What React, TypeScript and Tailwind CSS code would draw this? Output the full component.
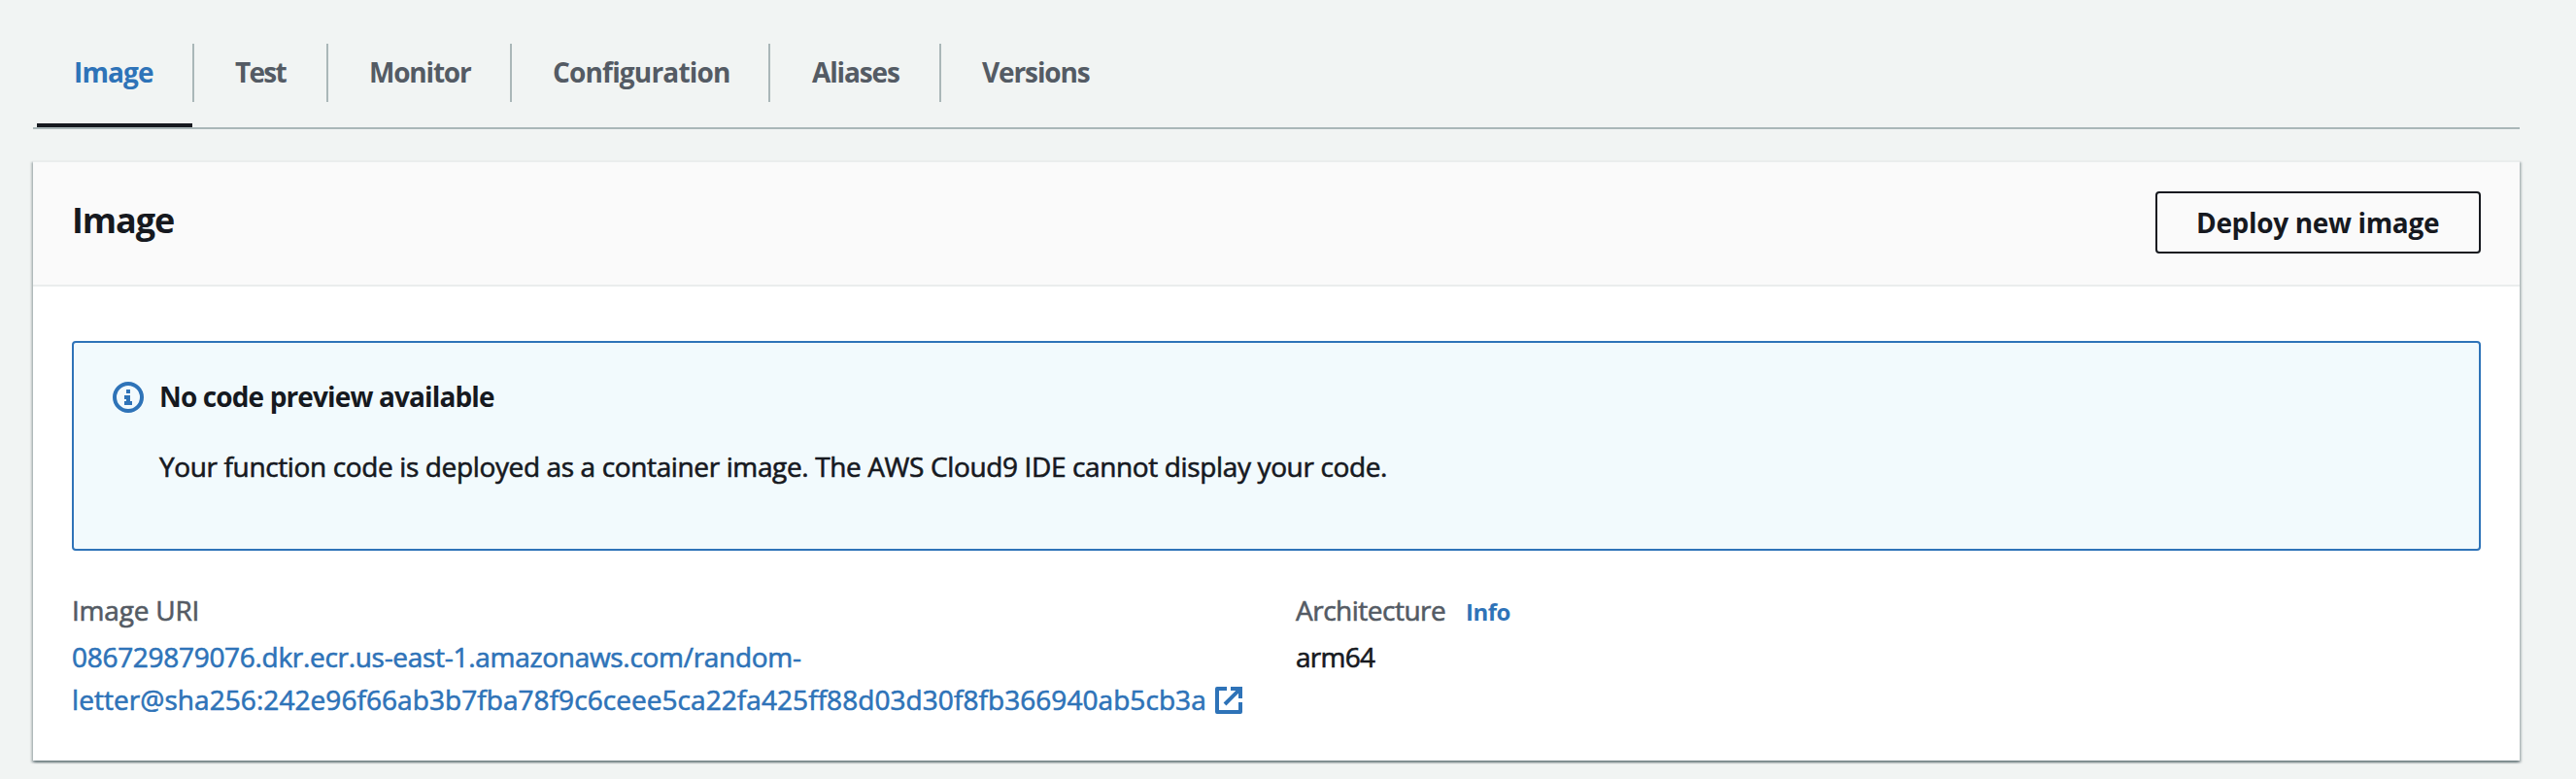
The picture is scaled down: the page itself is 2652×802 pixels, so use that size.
type Tab = { label: string; width: string; spacing: string; active?: boolean };

const tabs: Tab[] = [
  { label: "Image", width: "w-[162px] pl-[38px]", spacing: "tracking-[-0.87px]", active: true },
  { label: "Test", width: "w-[138px] pl-[42px]", spacing: "tracking-[-1.7px]" },
  { label: "Monitor", width: "w-[189px] pl-[42px]", spacing: "tracking-[-1.2px]" },
  { label: "Configuration", width: "w-[266px] pl-[42px]", spacing: "tracking-[-0.82px]" },
  { label: "Aliases", width: "w-[176px] pl-[43px]", spacing: "tracking-[-1.13px]" },
  { label: "Versions", width: "w-[160px] pl-[42px]", spacing: "tracking-[-1.12px]" },
];

function InfoIcon() {
  return (
    <svg width="32" height="32" viewBox="0 0 32 32" className="block shrink-0" fill="#2e73b8">
      <circle cx="16" cy="16" r="14" fill="none" stroke="#2e73b8" strokeWidth="4" />
      <path d="M14 8h4v4h-4zM12 14h6v6h2v4h-8v-4h2v-2h-2z" />
    </svg>
  );
}

function ExternalIcon() {
  return (
    <svg width="28" height="28" viewBox="0 0 28 28" className="block shrink-0" fill="none" stroke="#2e73b8" strokeWidth="4">
      <path d="M12 2H2v24h24V16" strokeLinejoin="round" />
      <path d="M16 2h10v10M26 2 10 18" />
    </svg>
  );
}

export default function App() {
  return (
    <div className="h-[802px] w-full overflow-hidden bg-[#f1f4f3] pr-[58px] pl-[34px] font-['Open_Sans','Noto_Sans',sans-serif] text-[28px] leading-[44px] text-[#16191f]">
      <nav className="flex h-[133px] border-b-2 border-[#aab7b8] pl-1">
        {tabs.map((tab, i) => (
          <div key={tab.label} className="flex flex-col justify-between pt-[45px]">
            <div
              className={`h-[60px] pt-[7px] font-bold whitespace-nowrap ${tab.width} ${tab.spacing} ${
                tab.active ? "text-[#2e73b8]" : "text-[#545b64]"
              } ${i < tabs.length - 1 ? "border-r-2 border-[#aab7b8]" : ""}`}
            >
              {tab.label}
            </div>
            {tab.active && <div className="h-1 w-[160px] bg-[#16191f]" />}
          </div>
        ))}
      </nav>

      <section className="mt-8 h-[618px] border-t-2 border-[#eaeded] bg-white shadow-[0_2px_2px_0_rgba(0,28,36,0.3),2px_2px_2px_0_rgba(0,28,36,0.2),-2px_2px_2px_0_rgba(0,28,36,0.2)]">
        <header className="flex h-32 items-start justify-between border-b-2 border-[#eaeded] bg-[#fafafa] pt-[30px] pr-10 pl-10">
          <h2 className="pt-[8px] text-[36px] font-bold tracking-[-1.09px]">Image</h2>
          <button className="flex h-16 w-[335px] items-center rounded-[4px] border-2 border-[#16191f] pl-10 font-bold tracking-[-0.34px] whitespace-nowrap">
            Deploy new image
          </button>
        </header>

        <div className="px-10 pt-14">
          <div className="flex h-[216px] gap-[15px] rounded-[4px] border-2 border-[#2e73b8] bg-[#f2fafd] pt-[33px] pl-10">
            <div className="pt-[7px]">
              <InfoIcon />
            </div>
            <div className="whitespace-nowrap">
              <div className="pl-px font-bold tracking-[-0.87px]">No code preview available</div>
              <div className="mt-7 pl-px tracking-[-0.37px] [-webkit-text-stroke:0.6px]">
                Your function code is deployed as a container image. The AWS Cloud9 IDE cannot display your code.
              </div>
            </div>
          </div>

          <div className="flex pt-[39px] [-webkit-text-stroke:0.6px]">
            <div className="w-[1260px] whitespace-nowrap">
              <div className="tracking-[-0.2px] text-[#545b64]">Image URI</div>
              <div className="mt-1 text-[#2e73b8]">
                <div className="tracking-[-0.3px]">086729879076.dkr.ecr.us-east-1.amazonaws.com/random-</div>
                <div className="flex">
                  <span className="w-[1177px] tracking-[0.06px]">
                    letter@sha256:242e96f66ab3b7fba78f9c6ceee5ca22fa425ff88d03d30f8fb366940ab5cb3a
                  </span>
                  <span className="pt-[9px]">
                    <ExternalIcon />
                  </span>
                </div>
              </div>
            </div>
            <div>
              <div className="flex h-11 items-baseline">
                <span className="w-[175px] tracking-[-0.5px] text-[#545b64]">Architecture</span>
                <span className="text-[24px] font-bold tracking-[-0.5px] text-[#2e73b8] [-webkit-text-stroke:0]">Info</span>
              </div>
              <div className="mt-1 tracking-[-0.73px]">arm64</div>
            </div>
          </div>
        </div>
      </section>
    </div>
  );
}
